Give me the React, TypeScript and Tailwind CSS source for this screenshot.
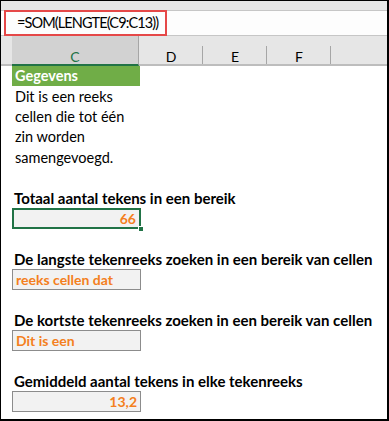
import React from "react";

const font = { fontFamily: "Lato, 'Noto Sans', sans-serif" };

function Row({ children, className = "" }: { children?: React.ReactNode; className?: string }) {
  return <div className={`h-[20.33px] flex items-center pl-[11px] ${className}`}>{children}</div>;
}

function Label({ text }: { text: string }) {
  return (
    <Row>
      <span className="pl-[2px] text-[15px] font-bold text-black whitespace-nowrap">{text}</span>
    </Row>
  );
}

function ValueBox({ value, right, selected }: { value: string; right?: boolean; selected?: boolean }) {
  return (
    <Row>
      <div
        className={`relative w-[129px] h-[21px] bg-[#f2f2f2] flex items-center px-[3px] ${
          selected ? "border-2 border-[#217346]" : "border border-[#8c8c8c]"
        } ${right ? "justify-end" : "justify-start"}`}
      >
        <span className="text-[14px] font-bold text-[#f47f20] whitespace-nowrap">{value}</span>
        {selected && (
          <div className="absolute right-[-5px] bottom-[-5px] w-[6px] h-[6px] bg-[#217346] border border-white" />
        )}
      </div>
    </Row>
  );
}

export default function App() {
  const cols = ["D", "E", "F"];
  return (
    <div
      className="w-[389px] h-[421px] overflow-hidden bg-white border-l border-t border-r-2 border-b-2 border-black flex flex-col"
      style={font}
    >
      {/* bovenbalk */}
      <div className="h-[10px] bg-[#e6e6e6] border-b border-[#c6c6c6]" />
      {/* formulebalk */}
      <div className="h-[25px] bg-[#fdfdfd] border-b border-[#c6c6c6] flex">
        <div className="ml-[3px] -mt-[1px] h-[26px] w-[163px] border-[2.5px] border-[#e54848] flex items-center pl-[11px]">
          <span className="text-[14.5px] tracking-[-0.9px] text-black whitespace-nowrap">=SOM(LENGTE(C9:C13))</span>
        </div>
      </div>
      {/* kolomkoppen */}
      <div className="h-[30px] bg-[#e6e6e6] border-b-2 border-[#bdbdbd] flex">
        <div className="w-[11px]" />
        <div className="w-[127px] h-[30px] bg-[#d2d2d2] border-b-2 border-[#217346] flex items-center justify-center border-r border-r-[#a6a6a6] pt-[13px]">
          <span className="text-[14px] text-[#217346]">C</span>
        </div>
        {cols.map((c) => (
          <div key={c} className="w-[64px] relative flex items-center justify-center pt-[13px]">
            <span className="text-[14px] text-black">{c}</span>
            <div className="absolute right-0 top-[10px] bottom-0 w-px bg-[#a6a6a6]" />
          </div>
        ))}
        <div className="flex-1" />
      </div>
      {/* werkblad */}
      <div className="flex flex-col">
        <Row>
          <div className="w-[128px] h-[20.33px] bg-[#70ad47] flex items-center pl-[3px]">
            <span className="text-[14.5px] font-bold text-white">Gegevens</span>
          </div>
        </Row>
        {["Dit is een reeks", "cellen die tot één", "zin worden", "samengevoegd."].map((t) => (
          <Row key={t}>
            <span className="pl-[3px] text-[14.5px] text-black whitespace-nowrap">{t}</span>
          </Row>
        ))}
        <Row />
        <Label text="Totaal aantal tekens in een bereik" />
        <ValueBox value="66" right selected />
        <Row />
        <Label text="De langste tekenreeks zoeken in een bereik van cellen" />
        <ValueBox value="reeks cellen dat" />
        <Row />
        <Label text="De kortste tekenreeks zoeken in een bereik van cellen" />
        <ValueBox value="Dit is een" />
        <Row />
        <Label text="Gemiddeld aantal tekens in elke tekenreeks" />
        <ValueBox value="13,2" right />
      </div>
    </div>
  );
}
